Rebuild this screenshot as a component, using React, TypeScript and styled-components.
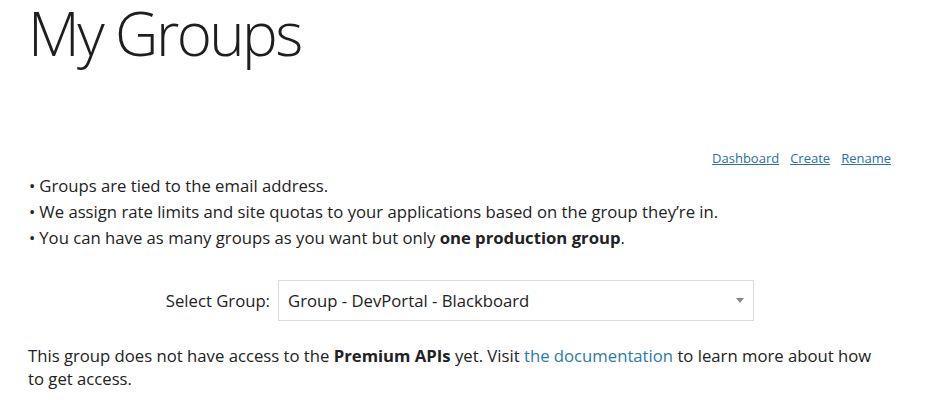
import React from "react";
import styled, { createGlobalStyle } from "styled-components";

const GlobalStyle = createGlobalStyle`
  html, body {
    margin: 0;
    padding: 0;
    background: #ffffff;
  }
  body {
    font-family: "Open Sans", "Liberation Sans", sans-serif;
    color: #222222;
  }
`;

const Page = styled.div`
  padding: 0 45px 0 28px;
`;

const Title = styled.h1`
  margin: 0;
  font-size: 60px;
  font-weight: 300;
  line-height: 66px;
  letter-spacing: -2.6px;
  color: #1e1e1e;
`;

const LinkBar = styled.nav`
  display: flex;
  justify-content: flex-end;
  gap: 11px;
  margin-top: 82px;
  font-size: 13px;
  line-height: 20px;
`;

const NavLink = styled.a`
  color: #2a6fa8;
  text-decoration: underline;
`;

const Bullets = styled.ul`
  list-style: none;
  margin: 5px 0 0;
  padding: 0;
  font-size: 16.7px;
  line-height: 26px;
`;

const Bullet = styled.li`
  &::before {
    content: "•";
    margin: 0 4px 0 1px;
  }
`;

const FormRow = styled.div`
  display: grid;
  grid-template-columns: 242px 476px;
  column-gap: 8px;
  align-items: center;
  margin-top: 29px;
`;

const Label = styled.label`
  text-align: right;
  font-size: 16.7px;
`;

const SelectBox = styled.div`
  position: relative;
  height: 41px;
  box-sizing: border-box;
  border: 1px solid #dcdcdc;
  display: flex;
  align-items: center;
  padding: 0 9px;
  font-size: 16.7px;
`;

const Arrow = styled.span`
  position: absolute;
  right: 9px;
  top: 17px;
  width: 0;
  height: 0;
  border-left: 4px solid transparent;
  border-right: 4px solid transparent;
  border-top: 5px solid #888;
`;

const Note = styled.p`
  margin: 23px 0 0;
  font-size: 16.7px;
  line-height: 23px;
  max-width: 860px;
`;

const DocLink = styled.a`
  color: #2a7ab0;
  text-decoration: none;
`;

export default function App() {
  return (
    <>
      <GlobalStyle />
      <Page>
        <Title>My Groups</Title>
        <LinkBar>
          <NavLink href="#">Dashboard</NavLink>
          <NavLink href="#">Create</NavLink>
          <NavLink href="#">Rename</NavLink>
        </LinkBar>
        <Bullets>
          <Bullet>Groups are tied to the email address.</Bullet>
          <Bullet>We assign rate limits and site quotas to your applications based on the group they’re in.</Bullet>
          <Bullet>
            You can have as many groups as you want but only <b>one production group</b>.
          </Bullet>
        </Bullets>
        <FormRow>
          <Label>Select Group:</Label>
          <SelectBox>
            Group - DevPortal - Blackboard
            <Arrow />
          </SelectBox>
        </FormRow>
        <Note>
          This group does not have access to the <b>Premium APIs</b> yet. Visit{" "}
          <DocLink href="#">the documentation</DocLink> to learn more about how to get access.
        </Note>
      </Page>
    </>
  );
}
